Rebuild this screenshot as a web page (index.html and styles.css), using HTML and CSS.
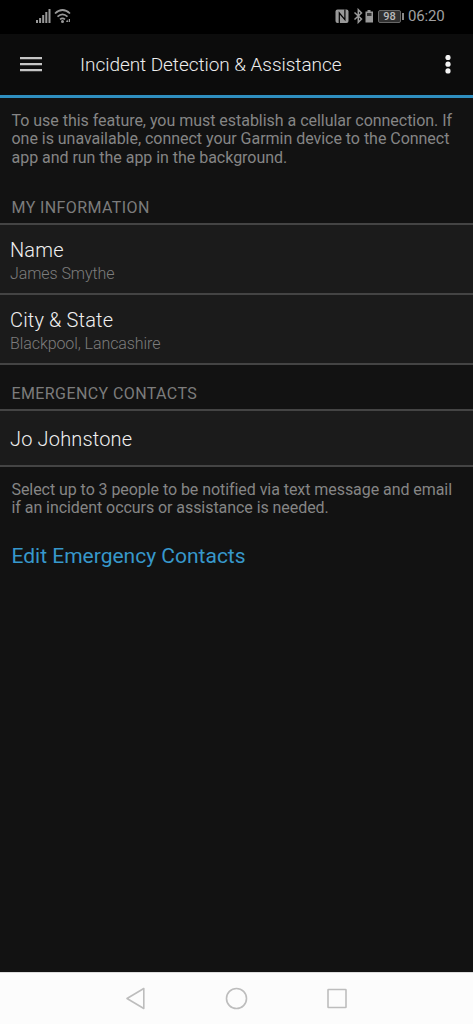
FILE: index.html
```html
<!DOCTYPE html>
<html lang="en">
<head>
<meta charset="utf-8">
<title>Incident Detection &amp; Assistance</title>
<link rel="stylesheet" href="styles.css">
</head>
<body>
<div class="status">
  <svg class="signals" width="38" height="16" viewBox="0 0 38 16" fill="#999">
    <path d="M0 12h2v3H0zM3.1 10h2v5h-2zM6.2 7h2v8h-2zM9.3 4h2v11h-2zM12.5 1h2v14h-2z"/>
    <g fill="none" stroke="#999" stroke-width="1.7"><path d="M19 5.500q7.500-7 15 0M21.500 8.600q5-4.600 10 0M24 11.400q2.500-2 5 0"/></g>
    <circle cx="26.500" cy="13.500" r="1.500"/><path d="M30 14l1.200-2.500 1.200 2.500zM32.800 11h1.200v3h-1.200z"/>
  </svg>
  <div class="right">
    <svg width="38" height="16" viewBox="0 0 38 16">
      <rect x=".5" y="1.500" width="13" height="13.500" rx="2" fill="#999"/>
      <path d="M4.300 15V5l5.600 6.700V1.500" fill="none" stroke="#000" stroke-width="1.200"/>
      <path d="M19.500 4.500l7 6.500-3.200 3.300V1.700L26.500 5l-7 6.500" fill="none" stroke="#999" stroke-width="1.500"/>
      <path d="M32.500 2h3v1.500H38V14.500h-7.500V3.500h2z" fill="#999"/><path d="M32 5h4.500v3H32z" fill="#333"/>
    </svg>
    <span class="battery">98</span><i class="tip"></i>
    <span class="clock">06:20</span>
  </div>
</div>
<header class="bar">
  <svg class="menu" width="22" height="15" viewBox="0 0 22 15" fill="#c6c6c6"><path d="M0 0h22v2.200H0zM0 6h22v2.200H0zM0 12h22v2.200H0z"/></svg>
  <h1 class="title">Incident Detection &amp; Assistance</h1>
  <svg class="more" width="6" height="20" viewBox="0 0 6 20" fill="#f4f4f4"><circle cx="3" cy="2.500" r="2.600"/><circle cx="3" cy="9.200" r="2.600"/><circle cx="3" cy="15.900" r="2.600"/></svg>
</header>
<main class="content">
  <p class="note intro">To use this feature, you must establish a cellular connection. If<br>one is unavailable, connect your Garmin device to the Connect<br>app and run the app in the background.</p>
  <h2 class="section">MY INFORMATION</h2>
  <div class="row"><span class="label">Name</span><span class="value">James Smythe</span></div>
  <div class="row"><span class="label">City &amp; State</span><span class="value">Blackpool, Lancashire</span></div>
  <h2 class="section contacts">EMERGENCY CONTACTS</h2>
  <div class="row single"><span class="label">Jo Johnstone</span></div>
  <p class="note help">Select up to 3 people to be notified via text message and email<br>if an incident occurs or assistance is needed.</p>
  <a class="edit">Edit Emergency Contacts</a>
</main>
<nav class="nav">
  <svg width="223" height="24" viewBox="0 0 223 24" fill="none" stroke="#bdbdbd" stroke-width="1.600" stroke-linejoin="round">
    <path d="M2 12.500L18.800 2.500v20z"/><circle cx="111.500" cy="12.500" r="10"/><rect x="203" y="3.500" width="18" height="18" rx=".5"/>
  </svg>
</nav>
</body>
</html>
```
FILE: styles.css
```css
* { box-sizing: border-box; margin: 0; padding: 0; }
body { width: 473px; height: 1024px; display: flex; flex-direction: column; background: #121212; font-family: Roboto, sans-serif; overflow: hidden; }
.status { height: 34px; flex: none; background: #000; display: flex; justify-content: space-between; padding: 8px 28px 0 36px; }
.right { display: flex; height: 16px; align-items: center; }
.battery { width: 23px; height: 13px; margin-left: 5px; border: 1px solid #666; border-radius: 2px; background: #303030; color: #bbb; font-size: 11px; line-height: 11px; text-align: center; font-weight: 500; }
.tip { width: 2px; height: 7px; margin-left: 1px; background: #888; }
.clock { margin-left: 4px; width: 37px; font-size: 15px; line-height: 16px; letter-spacing: -.15px; color: #a0a0a0; white-space: nowrap; }
.bar { height: 64px; flex: none; display: flex; align-items: center; background: #0c0c0c; border-bottom: 3px solid #2f8fc0; padding: 0 22px 0 20px; }
.title { margin-left: 38px; font-size: 19px; line-height: 24px; font-weight: 300; letter-spacing: -.05px; color: #ededed; white-space: nowrap; }
.more { margin-left: auto; }
.content { flex: 1; }
.note { padding-left: 11.5px; font-size: 16px; line-height: 18.3px; letter-spacing: -.03px; color: #858585; white-space: nowrap; }
.intro { padding-top: 14px; height: 85px; }
.section { height: 42px; padding: 15px 0 0 11.5px; font-size: 16px; line-height: 19px; font-weight: 400; letter-spacing: .4px; color: #7c7c7c; border-bottom: 2px solid #444; }
.contacts { height: 46px; padding-top: 19px; }
.row { height: 70px; padding: 13px 0 0 10px; background: #1b1b1b; border-bottom: 2px solid #444; display: flex; flex-direction: column; }
.single { height: 56px; padding-top: 16px; }
.label { font-size: 20px; line-height: 24px; font-weight: 300; letter-spacing: .16px; color: #f0f0f0; }
.value { margin-top: 2px; font-size: 16px; line-height: 19px; font-weight: 300; letter-spacing: -.08px; color: #7d7d7d; }
.help { padding-top: 14px; letter-spacing: -.06px; }
.edit { display: block; margin: 26px 0 0 11.5px; font-size: 21px; line-height: 25px; color: #3798cb; }
.nav { height: 52px; flex: none; background: #fcfcfc; border-top: 1px solid #ddd; padding: 13px 0 0 125px; }
```
